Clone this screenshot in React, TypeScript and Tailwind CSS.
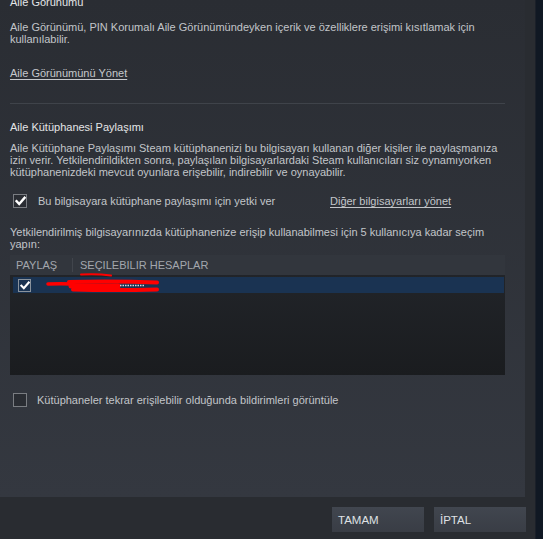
import React from "react";

const font = { fontFamily: '"Liberation Sans", Arial, sans-serif' };

function Check({ checked }: { checked?: boolean }) {
  return (
    <div className="w-[14px] h-[14px] border border-[#7a7d82] flex items-center justify-center shrink-0 bg-[#2a2d33]">
      {checked && (
        <svg width="11" height="10" viewBox="0 0 11 10">
          <path d="M1.5 5.2 L4.2 8 L9.6 1.8" fill="none" stroke="#ffffff" strokeWidth="2.4" strokeLinecap="square" />
        </svg>
      )}
    </div>
  );
}

export default function App() {
  return (
    <div className="w-[543px] h-[539px] flex overflow-hidden text-[11px] leading-[12px]" style={font}>
      <div className="w-[535px] h-full bg-[#292c31] flex flex-col">
        <div className="w-[525px] h-[497px] bg-gradient-to-b from-[#2a2d33] to-[#343840] overflow-hidden pl-[10px] pr-[20px] text-[#c2c5c9]">
          <div className="-mt-[4px] text-[#e4e5e7] h-[12px]">Aile Görünümü</div>
          <div className="mt-[13px]">
            Aile Görünümü, PIN Korumalı Aile Görünümündeyken içerik ve özelliklere erişimi kısıtlamak için kullanılabilir.
          </div>
          <div className="mt-[22px]">
            <span className="underline underline-offset-[2px] text-[#c6c8cc]">Aile Görünümünü Yönet</span>
          </div>
          <div className="mt-[24px] h-px bg-[#3f434a] w-[495px]" />
          <div className="mt-[17px] text-[#e4e5e7]">Aile Kütüphanesi Paylaşımı</div>
          <div className="mt-[9px]">
            Aile Kütüphane Paylaşımı Steam kütüphanenizi bu bilgisayarı kullanan diğer kişiler ile paylaşmanıza izin verir. Yetkilendirildikten sonra, paylaşılan bilgisayarlardaki Steam kullanıcıları siz oynamıyorken kütüphanenizdeki mevcut oyunlara erişebilir, indirebilir ve oynayabilir.
          </div>
          <div className="mt-[16px] flex items-center h-[14px]">
            <div className="ml-[3px]">
              <Check checked />
            </div>
            <span className="ml-[11px] w-[292px]">Bu bilgisayara kütüphane paylaşımı için yetki ver</span>
            <span className="underline underline-offset-[2px]">Diğer bilgisayarları yönet</span>
          </div>
          <div className="mt-[18px]">
            Yetkilendirilmiş bilgisayarınızda kütüphanenize erişip kullanabilmesi için 5 kullanıcıya kadar seçim yapın:
          </div>
          <div className="mt-[5px] w-[495px] h-[120px] bg-gradient-to-b from-[#23262b] to-[#1a1c1f]">
            <div className="h-[20px] bg-[#32363d] flex items-center text-[11px] text-[#a3a7ad] uppercase">
              <span className="w-[62px] pl-[6px]">PAYLAŞ</span>
              <span className="h-[14px] w-px bg-[#41454c]" />
              <span className="pl-[7px]">SEÇILEBILIR HESAPLAR</span>
            </div>
            <div className="relative mt-[2px] ml-[3px] mr-[1px] h-[16px] bg-[#1a3352] flex items-center">
              <div className="ml-[5px]">
                <div className="w-[13px] h-[13px] border border-[#8a929c] flex items-center justify-center">
                  <svg width="10" height="9" viewBox="0 0 11 10">
                    <path d="M1.5 5.2 L4.2 8 L9.6 1.8" fill="none" stroke="#ffffff" strokeWidth="2.4" strokeLinecap="square" />
                  </svg>
                </div>
              </div>
              <svg className="absolute left-0 -top-[5px]" width="160" height="24" viewBox="0 0 160 24">
                <path d="M68 2.5 Q84 1.5 98 3.5" fill="none" stroke="#ff0000" strokeWidth="2" strokeLinecap="round" />
                <path d="M35 12 Q48 11.5 60 12" fill="none" stroke="#ff0000" strokeWidth="3.5" strokeLinecap="round" />
                <path d="M56 10 Q100 9 144 10.5" fill="none" stroke="#ff0000" strokeWidth="4" strokeLinecap="round" />
                <path d="M58 14 L105 14" fill="none" stroke="#ff0000" strokeWidth="5" strokeLinecap="round" />
                <path d="M60 17.5 Q100 18.5 144 17.5" fill="none" stroke="#ff0000" strokeWidth="4" strokeLinecap="round" />
                <path d="M107 13.5 L131 13.5" fill="none" stroke="#d8d8e0" strokeWidth="1.5" strokeDasharray="1.5 1" />
              </svg>
            </div>
          </div>
          <div className="mt-[18px] flex items-center h-[14px]">
            <div className="ml-[3px]">
              <Check />
            </div>
            <span className="ml-[10px]">Kütüphaneler tekrar erişilebilir olduğunda bildirimleri görüntüle</span>
          </div>
        </div>
        <div className="flex justify-end gap-[10px] pr-[9px] pt-[10px]">
          <button className="w-[92px] h-[25px] bg-gradient-to-b from-[#41464f] to-[#393d45] text-left pl-[6px] text-[11.5px] text-[#dfe1e4]">
            TAMAM
          </button>
          <button className="w-[92px] h-[25px] bg-gradient-to-b from-[#41464f] to-[#393d45] text-left pl-[6px] text-[11.5px] text-[#dfe1e4]">
            İPTAL
          </button>
        </div>
      </div>
      <div className="w-[8px] h-full bg-[#101823] border-l border-[#1b2029]" />
    </div>
  );
}
